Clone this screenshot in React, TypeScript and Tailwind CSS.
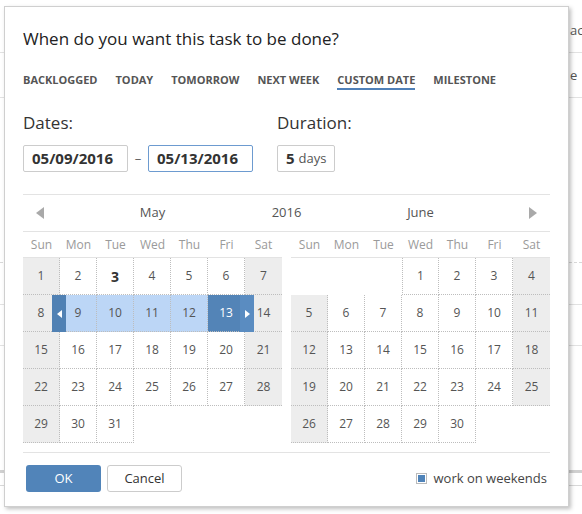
import React from "react";

type Cell = { d: number | null; col: number };

function monthCells(startCol: number, days: number): Cell[][] {
  const rows: Cell[][] = [];
  let row: Cell[] = [];
  for (let i = 0; i < startCol; i++) row.push({ d: null, col: i });
  for (let d = 1; d <= days; d++) {
    row.push({ d, col: row.length });
    if (row.length === 7) {
      rows.push(row);
      row = [];
    }
  }
  if (row.length) {
    while (row.length < 7) row.push({ d: null, col: row.length });
    rows.push(row);
  }
  return rows;
}

const DOW = ["Sun", "Mon", "Tue", "Wed", "Thu", "Fri", "Sat"];

function Month({ rows, isMay }: { rows: Cell[][]; isMay: boolean }) {
  return (
    <div className="w-[259px]">
      <div className="flex h-[26px] items-center border-b border-[#e3e3e3] text-[12px] text-[#9a9a9a]">
        {DOW.map((d) => (
          <div key={d} className="w-[37px] text-center">
            {d}
          </div>
        ))}
      </div>
      <div className="relative">
        {rows.map((row, ri) => (
          <div key={ri} className="flex">
            {row.map((c, ci) => {
              if (c.d === null) return <div key={ci} className="h-[37px] w-[37px]" />;
              const weekend = c.col === 0 || c.col === 6;
              const prevEmpty = ci > 0 && row[ci - 1].d === null;
              const inRange = isMay && c.d >= 9 && c.d <= 12;
              const endSel = isMay && c.d === 13;
              const today = isMay && c.d === 3;
              let bg = weekend ? "bg-[#ededed]" : "bg-white";
              if (inRange) bg = "bg-[#bcd6f6]";
              if (endSel) bg = "bg-[#5384b7]";
              return (
                <div
                  key={ci}
                  className={`box-border flex h-[37px] w-[37px] items-center justify-center border-b border-dotted border-[#bdbdbd] ${
                    c.col === 6 ? "" : "border-r"
                  } ${prevEmpty ? "border-l" : ""} ${bg} ${
                    endSel
                      ? "text-[12px] text-white"
                      : today
                      ? "text-[14px] font-bold text-[#333]"
                      : "text-[12px] text-[#555]"
                  }`}
                >
                  {c.d}
                </div>
              );
            })}
          </div>
        ))}
        {isMay && (
          <>
            <div className="absolute left-[29px] top-[37px] flex h-[37px] w-[14px] items-center justify-center bg-[#5081b4]">
              <svg width="5" height="8" viewBox="0 0 5 8">
                <path d="M5 0 L0 4 L5 8 Z" fill="#fff" />
              </svg>
            </div>
            <div className="absolute left-[217px] top-[37px] flex h-[37px] w-[14px] items-center justify-center bg-[#5a8cc1]">
              <svg width="5" height="8" viewBox="0 0 5 8">
                <path d="M0 0 L5 4 L0 8 Z" fill="#fff" />
              </svg>
            </div>
          </>
        )}
      </div>
    </div>
  );
}

export default function App() {
  const may = monthCells(0, 31);
  const june = monthCells(3, 30);
  const tabs = ["BACKLOGGED", "TODAY", "TOMORROW", "NEXT WEEK", "CUSTOM DATE", "MILESTONE"];
  return (
    <div className="relative h-[514px] w-[582px] overflow-hidden bg-white font-['Open_Sans',sans-serif]">
      {/* background page behind the modal */}
      <div className="absolute left-0 right-0 top-[52px] h-px bg-[#e2e2e2]" />
      <div className="absolute left-0 right-0 top-[97px] h-px bg-[#e2e2e2]" />
      <div className="absolute left-0 right-0 top-[262px] border-t border-dashed border-[#d8d8d8]" />
      <div className="absolute left-0 right-0 top-[304px] h-px bg-[#e2e2e2]" />
      <div className="absolute left-0 right-0 top-[345px] h-px bg-[#e2e2e2]" />
      <div className="absolute left-0 right-0 top-[470px] h-[3px] bg-[#d0d0d0]" />
      <div className="absolute left-0 right-0 top-[485px] h-px bg-[#d8d8d8]" />
      <div className="absolute left-[570px] top-[21px] text-[13px] text-[#555]">ac</div>
      <div className="absolute left-[570px] top-[66px] text-[13px] text-[#555]">e</div>

      {/* modal */}
      <div className="absolute left-[4px] top-[6px] flex h-[501px] w-[565px] flex-col border border-[#cfcfcf] bg-white px-[18px] pt-[20px] shadow-[2px_2px_4px_rgba(0,0,0,0.25)]">
        <div className="text-[17px] leading-[24px] text-[#222]">When do you want this task to be done?</div>

        <div className="mt-[21px] flex gap-[18px] text-[11px] font-bold leading-[16px] text-[#555]">
          {tabs.map((t) => (
            <div
              key={t}
              className={`border-b-2 ${t === "CUSTOM DATE" ? "border-[#4f80b8]" : "border-transparent"}`}
            >
              {t}
            </div>
          ))}
        </div>

        <div className="mt-[22px] flex">
          <div className="w-[254px]">
            <div className="text-[17px] leading-[22px] text-[#333]">Dates:</div>
            <div className="mt-[11px] flex items-center">
              <div className="box-border flex h-[27px] w-[105px] items-center rounded-[2px] border border-[#cccccc] pl-[8px] text-[15px] font-bold text-[#333]">
                05/09/2016
              </div>
              <div className="w-[20px] text-center text-[13px] text-[#666]">–</div>
              <div className="box-border flex h-[27px] w-[105px] items-center rounded-[2px] border border-[#6d9bd0] pl-[8px] text-[15px] font-bold text-[#333]">
                05/13/2016
              </div>
            </div>
          </div>
          <div>
            <div className="text-[17px] leading-[22px] text-[#333]">Duration:</div>
            <div className="mt-[11px] box-border flex h-[27px] w-[58px] items-center rounded-[2px] border border-[#cccccc] pl-[8px]">
              <span className="text-[15px] font-bold text-[#333]">5</span>
              <span className="ml-[4px] text-[13px] text-[#555]">days</span>
            </div>
          </div>
        </div>

        <div className="mt-[22px] w-[527px] border-t border-[#e3e3e3]">
          <div className="flex h-[37px] items-center border-b border-[#e3e3e3] text-[13px] text-[#555]">
            <div className="flex w-[259px] items-center">
              <div className="w-[33px] pl-[13px]">
                <svg width="8" height="12" viewBox="0 0 8 12">
                  <path d="M8 0 L0 6 L8 12 Z" fill="#a9a9a9" />
                </svg>
              </div>
              <div className="flex-1 text-center">May</div>
              <div className="w-[33px]" />
            </div>
            <div className="flex w-[9px] justify-center whitespace-nowrap">2016</div>
            <div className="flex w-[259px] items-center">
              <div className="w-[33px]" />
              <div className="flex-1 text-center">June</div>
              <div className="flex w-[33px] justify-end pr-[13px]">
                <svg width="8" height="12" viewBox="0 0 8 12">
                  <path d="M0 0 L8 6 L0 12 Z" fill="#a9a9a9" />
                </svg>
              </div>
            </div>
          </div>
          <div className="flex gap-[9px]">
            <Month rows={may} isMay={true} />
            <Month rows={june} isMay={false} />
          </div>
        </div>

        <div className="mt-[9px] flex w-[527px] items-center border-t border-[#e3e3e3] pl-[3px] pt-[12px]">
          <button className="h-[27px] w-[75px] rounded-[3px] bg-[#5184b9] text-[13px] text-white">OK</button>
          <button className="ml-[6px] box-border h-[27px] w-[75px] rounded-[3px] border border-[#cccccc] bg-white text-[13px] text-[#333]">
            Cancel
          </button>
          <div className="ml-auto flex items-center pr-[3px]">
            <div className="box-border flex h-[11px] w-[11px] items-center justify-center border border-[#bbbbbb] bg-white">
              <div className="h-[7px] w-[7px] bg-[#4f83b9]" />
            </div>
            <span className="ml-[6px] text-[13px] text-[#444]">work on weekends</span>
          </div>
        </div>
      </div>
    </div>
  );
}
